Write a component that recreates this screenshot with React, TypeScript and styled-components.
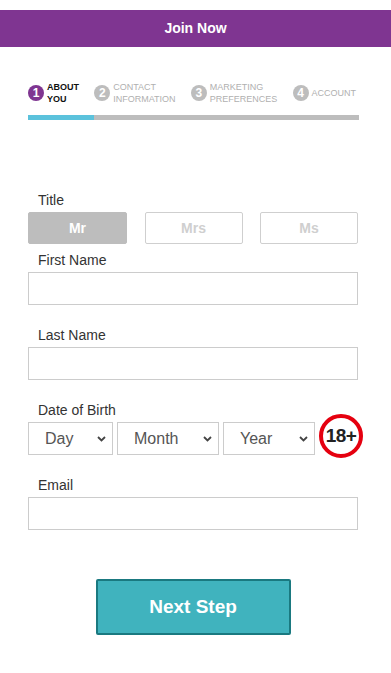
import React from "react";
import styled, { createGlobalStyle } from "styled-components";

const GlobalStyle = createGlobalStyle`
  body {
    margin: 0;
    background: #fff;
    font-family: "Liberation Sans", Arial, sans-serif;
  }
  * { box-sizing: border-box; }
`;

const Page = styled.div`
  padding-top: 10px;
  padding-bottom: 38px;
`;

const Header = styled.div`
  height: 37px;
  background: #7f3591;
  color: #fff;
  font-weight: bold;
  font-size: 14px;
  display: flex;
  align-items: center;
  justify-content: center;
  padding-bottom: 1px;
`;

const Steps = styled.div`
  padding: 34px 32px 0 28px;
`;

const StepRow = styled.div`
  display: flex;
  justify-content: space-between;
  align-items: center;
  height: 24px;
  padding-right: 3px;
`;

const Step = styled.div`
  display: flex;
  align-items: center;
  gap: 3px;
`;

const StepNum = styled.span<{ $active?: boolean }>`
  width: 16px;
  height: 16px;
  border-radius: 50%;
  background: ${(p) => (p.$active ? "#7f3591" : "#bdbdbd")};
  color: #fff;
  font-weight: bold;
  font-size: 12px;
  display: flex;
  align-items: center;
  justify-content: center;
  flex-shrink: 0;
`;

const StepLabel = styled.span<{ $active?: boolean }>`
  font-size: 9px;
  line-height: 12px;
  text-transform: uppercase;
  color: ${(p) => (p.$active ? "#111" : "#b0b0b0")};
  font-weight: ${(p) => (p.$active ? "bold" : "normal")};
`;

const Progress = styled.div`
  margin-top: 10px;
  height: 5px;
  background: #bdbdbd;
`;

const ProgressFill = styled.div`
  height: 100%;
  background: #5bc2dc;
`;

const Form = styled.form`
  padding: 72px 33px 0 28px;
  display: flex;
  flex-direction: column;
`;

const Label = styled.label<{ $gap?: number }>`
  display: block;
  padding-left: 10px;
  font-size: 14px;
  line-height: 16px;
  color: #333;
  margin-top: ${(p) => p.$gap ?? 0}px;
  margin-bottom: 4px;
`;

const TitleRow = styled.div`
  display: grid;
  grid-template-columns: 99px 98px 98px;
  justify-content: space-between;
`;

const TitleButton = styled.button<{ $selected?: boolean }>`
  height: 32px;
  border-radius: 2px;
  border: 1px solid ${(p) => (p.$selected ? "#bdbdbd" : "#cfcfcf")};
  background: ${(p) => (p.$selected ? "#bdbdbd" : "#fff")};
  color: ${(p) => (p.$selected ? "#fff" : "#cfcfcf")};
  font-family: inherit;
  font-weight: bold;
  font-size: 14px;
  padding: 0;
`;

const TextInput = styled.input`
  display: block;
  width: 100%;
  height: 33px;
  border: 1px solid #cccccc;
  font-family: inherit;
  font-size: 14px;
  padding: 0 8px;
  outline: none;
`;

const DobRow = styled.div`
  display: flex;
  align-items: flex-start;
  gap: 4px;
  height: 33px;
`;

const SelectWrap = styled.div<{ $w: number }>`
  position: relative;
  flex-shrink: 0;
  width: ${(p) => p.$w}px;
  height: 33px;
`;

const Select = styled.select`
  appearance: none;
  width: 100%;
  height: 100%;
  border: 1px solid #cccccc;
  background: #fff;
  font-family: inherit;
  font-size: 16px;
  color: #555;
  padding: 0 0 0 16px;
  outline: none;
`;

const Chevron = styled.svg`
  position: absolute;
  right: 7px;
  top: 14px;
  pointer-events: none;
`;

const AgeBadge = styled.div`
  width: 44px;
  height: 44px;
  margin-top: -8px;
  flex-shrink: 0;
  border-radius: 50%;
  border: 4px solid #e5000f;
  display: flex;
  align-items: center;
  justify-content: center;
  font-weight: bold;
  font-size: 19px;
  color: #222;
  letter-spacing: -0.5px;
`;

const NextButton = styled.button`
  align-self: center;
  margin-top: 49px;
  width: 195px;
  height: 56px;
  background: #40b3be;
  border: 2px solid #1a7980;
  border-radius: 2px;
  color: #fff;
  font-family: inherit;
  font-weight: bold;
  font-size: 19px;
`;

const steps = [
  { n: 1, lines: ["About", "You"] },
  { n: 2, lines: ["Contact", "Information"] },
  { n: 3, lines: ["Marketing", "Preferences"] },
  { n: 4, lines: ["Account"] },
];

function DateSelect({ w, label }: { w: number; label: string }) {
  return (
    <SelectWrap $w={w}>
      <Select defaultValue="">
        <option value="">{label}</option>
      </Select>
      <Chevron width="9" height="6" viewBox="0 0 9 6">
        <path d="M1 1l3.5 3.5L8 1" fill="none" stroke="#444" strokeWidth="1.8" />
      </Chevron>
    </SelectWrap>
  );
}

export default function App() {
  return (
    <>
      <GlobalStyle />
      <Page>
        <Header>Join Now</Header>
        <Steps>
          <StepRow>
            {steps.map((s) => (
              <Step key={s.n}>
                <StepNum $active={s.n === 1}>{s.n}</StepNum>
                <StepLabel $active={s.n === 1}>
                  {s.lines.map((l, i) => (
                    <React.Fragment key={l}>
                      {i > 0 && <br />}
                      {l}
                    </React.Fragment>
                  ))}
                </StepLabel>
              </Step>
            ))}
          </StepRow>
          <Progress>
            <ProgressFill style={{ width: "20%" }} />
          </Progress>
        </Steps>
        <Form onSubmit={(e) => e.preventDefault()}>
          <Label>Title</Label>
          <TitleRow>
            <TitleButton type="button" $selected>Mr</TitleButton>
            <TitleButton type="button">Mrs</TitleButton>
            <TitleButton type="button">Ms</TitleButton>
          </TitleRow>
          <Label $gap={8}>First Name</Label>
          <TextInput type="text" />
          <Label $gap={22}>Last Name</Label>
          <TextInput type="text" />
          <Label $gap={22}>Date of Birth</Label>
          <DobRow>
            <DateSelect w={85} label="Day" />
            <DateSelect w={102} label="Month" />
            <DateSelect w={92} label="Year" />
            <AgeBadge>18+</AgeBadge>
          </DobRow>
          <Label $gap={22}>Email</Label>
          <TextInput type="email" />
          <NextButton type="submit">Next Step</NextButton>
        </Form>
      </Page>
    </>
  );
}
